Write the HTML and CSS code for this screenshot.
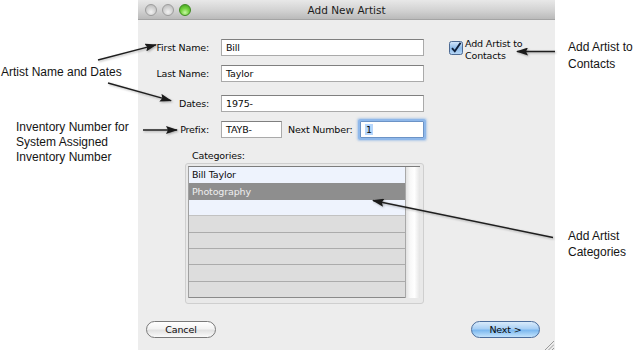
FILE: index.html
```html
<!DOCTYPE html>
<html>
<head>
<meta charset="utf-8">
<title>Add New Artist</title>
<link rel="stylesheet" href="styles.css">
</head>
<body>
<div class="page">
  <div class="notes-left">
    <div class="note note-names">Artist Name and Dates</div>
    <div class="note note-inv">Inventory Number for<br>System Assigned<br>Inventory Number</div>
  </div>

  <div class="window">
    <div class="titlebar">
      <div class="lights">
        <span class="light"></span>
        <span class="light"></span>
        <span class="light green"></span>
      </div>
      <div class="title">Add New Artist</div>
      <div></div>
    </div>

    <div class="content">
      <div class="top">
        <div class="form">
          <div class="row">
            <span class="label">First Name:</span>
            <div class="field">Bill</div>
          </div>
          <div class="row">
            <span class="label">Last Name:</span>
            <div class="field">Taylor</div>
          </div>
          <div class="row row-dates">
            <span class="label">Dates:</span>
            <div class="field">1975-</div>
          </div>
          <div class="row">
            <span class="label">Prefix:</span>
            <div class="field-group">
              <div class="field field-prefix">TAYB-</div>
              <span class="label-next">Next Number:</span>
              <div class="field field-next"><span class="sel">1</span></div>
            </div>
          </div>
        </div>
        <div class="check">
          <svg class="checkbox" width="14" height="14" viewBox="0 0 14 14">
            <defs>
              <linearGradient id="cbg" x1="0" y1="0" x2="0" y2="1">
                <stop offset="0" stop-color="#d7e8fb"/>
                <stop offset="0.5" stop-color="#8ebbea"/>
                <stop offset="1" stop-color="#b9d8f7"/>
              </linearGradient>
            </defs>
            <rect x="0.5" y="0.5" width="13" height="13" rx="2" fill="url(#cbg)" stroke="#4d6a93"/>
            <path d="M3 7.2 L5.8 10.3 L11.6 1.8" fill="none" stroke="#0f1f3a" stroke-width="1.9"/>
          </svg>
          <span class="check-label">Add Artist to<br>Contacts</span>
        </div>
      </div>

      <div class="cat-label">Categories:</div>
      <div class="list-frame">
        <div class="table">
          <div class="rows">
            <div class="trow light-row">Bill Taylor</div>
            <div class="trow light-row selected">Photography</div>
            <div class="trow light-row last-light"></div>
            <div class="trow grey-row"></div>
            <div class="trow grey-row"></div>
            <div class="trow grey-row"></div>
            <div class="trow grey-row"></div>
            <div class="trow grey-row"></div>
          </div>
          <div class="track"></div>
        </div>
      </div>

      <div class="buttons">
        <div class="btn">Cancel</div>
        <div class="btn btn-default">Next &gt;</div>
      </div>
    </div>

    <svg class="grip" width="10" height="10" viewBox="0 0 10 10">
      <g stroke="#9a9a9a" stroke-width="1">
        <line x1="1" y1="10" x2="10" y2="1"/>
        <line x1="4.5" y1="10" x2="10" y2="4.5"/>
        <line x1="8" y1="10" x2="10" y2="8"/>
      </g>
    </svg>
  </div>

  <div class="notes-right">
    <div class="note note-contacts">Add Artist to<br>Contacts</div>
    <div class="note note-cats">Add Artist<br>Categories</div>
  </div>

  <svg class="arrows" width="635" height="350" viewBox="0 0 635 350">
    <defs>
      <marker id="ah" markerWidth="12" markerHeight="8" refX="11" refY="4" orient="auto" markerUnits="userSpaceOnUse">
        <path d="M0,0 L12,4 L0,8 L2,4 z" fill="#1a1a1a"/>
      </marker>
    </defs>
    <g class="arrow-lines" stroke="#1e1e1e" stroke-width="1.3" fill="none">
      <line x1="98" y1="60" x2="156" y2="44.8" marker-end="url(#ah)"/>
      <line x1="108" y1="83" x2="171" y2="100.7" marker-end="url(#ah)"/>
      <line x1="143" y1="130" x2="177" y2="130" marker-end="url(#ah)"/>
      <line x1="555" y1="51.5" x2="517" y2="51.5" marker-end="url(#ah)"/>
      <line x1="553" y1="237.5" x2="373" y2="200.5" marker-end="url(#ah)"/>
    </g>
  </svg>
</div>
</body>
</html>
```

FILE: styles.css
```css
html, body {
  margin: 0;
  padding: 0;
  background: #ffffff;
}

.page {
  position: relative;
  display: flex;
  width: 635px;
  height: 350px;
  overflow: hidden;
  background: #ffffff;
  font-family: "Liberation Sans", Arial, sans-serif;
}

/* annotations */
.note {
  font-size: 12px;
  color: #141414;
  white-space: nowrap;
}

.notes-left {
  width: 138px;
  flex: none;
}

.note-names {
  margin-top: 64px;
  padding-left: 1px;
  line-height: 16px;
}

.note-inv {
  margin-top: 40px;
  padding-left: 16px;
  line-height: 15px;
}

.notes-right {
  flex: 1;
  padding-left: 13px;
}

.note-contacts {
  margin-top: 39px;
  line-height: 16.5px;
}

.note-cats {
  margin-top: 156px;
  line-height: 16px;
}

/* window */
.window {
  position: relative;
  width: 417px;
  height: 350px;
  flex: none;
  background: #ededed;
  display: flex;
  flex-direction: column;
  font-family: "DejaVu Sans", sans-serif;
  font-size: 9.5px;
  letter-spacing: -0.15px;
  color: #0a0a0a;
}

.titlebar {
  height: 19px;
  border-bottom: 1px solid #a4a4a4;
  background: linear-gradient(#e8e8e8, #d2d2d2 55%, #bababa);
  display: grid;
  grid-template-columns: 1fr auto 1fr;
  align-items: center;
}

.lights {
  display: flex;
  gap: 5px;
  padding-left: 7px;
}

.light {
  width: 12px;
  height: 12px;
  box-sizing: border-box;
  border-radius: 50%;
  border: 1px solid #9c9c9c;
  background: radial-gradient(circle at 50% 70%, #f2f2f2 0%, #d2d2d2 50%, #b4b4b4 100%);
}

.light.green {
  border-color: #3f8a22;
  background: radial-gradient(circle at 50% 75%, #c9f7a6 0%, #74d33f 45%, #3c9a1a 100%);
}

.title {
  font-size: 10.5px;
  letter-spacing: 0;
  color: #1c1c1c;
}

.content {
  padding-top: 19px;
  display: flex;
  flex-direction: column;
}

.top {
  display: flex;
  align-items: flex-start;
}

.form {
  display: flex;
  flex-direction: column;
}

.row {
  display: flex;
  align-items: center;
  height: 17px;
}

.row + .row {
  margin-top: 9px;
}

.row.row-dates {
  margin-top: 13px;
}

.label {
  width: 71px;
  text-align: right;
  flex: none;
}

.field {
  box-sizing: border-box;
  width: 203px;
  height: 17px;
  margin-left: 12px;
  padding-left: 4px;
  background: #ffffff;
  border: 1px solid #aaaaaa;
  border-top-color: #7f7f7f;
  line-height: 15px;
  color: #0a0a0a;
}

.field-group {
  display: flex;
  align-items: center;
  width: 203px;
  margin-left: 12px;
}

.field-group .field {
  margin-left: 0;
}

.field-prefix {
  width: 61px;
  margin-left: 1px;
}

.label-next {
  margin-left: 6px;
}

.field-next {
  width: 64px;
  margin-left: auto !important;
  border-color: #6c93c6;
  border-radius: 1px;
  box-shadow: 0 0 0 2px #8fb8ea, 0 0 2px 3px rgba(120, 170, 230, 0.5);
}

.sel {
  background: #b6d6fc;
  padding: 0 1px;
}

.check {
  display: flex;
  align-items: flex-start;
  margin-left: 25px;
  margin-top: -1px;
  gap: 2px;
}

.checkbox {
  margin-top: 3px;
  flex: none;
}

.check-label {
  line-height: 12px;
  white-space: nowrap;
}

.cat-label {
  margin-top: 12px;
  margin-left: 54px;
  line-height: 12px;
}

.list-frame {
  box-sizing: border-box;
  width: 239px;
  height: 141px;
  margin-top: 1px;
  margin-left: 47px;
  padding: 2px 3px 5px 2px;
  border: 1px solid #cfcfcf;
  border-radius: 3px;
  background: #e9e9e9;
  display: flex;
  flex-direction: column;
}

.table {
  flex: 1;
  display: flex;
  border-top: 1px solid #7c7c7c;
  border-left: 1px solid #a0a0a0;
}

.rows {
  box-sizing: border-box;
  width: 217px;
  border-right: 1px solid #a8a8a8;
  display: flex;
  flex-direction: column;
}

.trow {
  box-sizing: border-box;
  height: 16.375px;
  padding-left: 3px;
  display: flex;
  align-items: center;
  border-bottom: 1px solid transparent;
}

.light-row {
  background: #eef3fd;
}

.light-row.selected {
  background: #8e8e8e;
  color: #efefef;
}

.light-row.last-light {
  border-bottom-color: #c2c2c2;
}

.grey-row {
  background: #dddddd;
  border-bottom-color: #ababab;
}

.grey-row:last-child {
  border-bottom-color: #8a8a8a;
}

.track {
  flex: 1;
  background: linear-gradient(to right, #e2e2e2, #f8f8f8 30%, #ffffff 60%, #e4e4e4);
}

.buttons {
  display: flex;
  justify-content: space-between;
  margin-top: 17px;
  padding: 0 15px 0 8px;
}

.btn {
  box-sizing: border-box;
  width: 70px;
  height: 17px;
  border: 1px solid #7a7a7a;
  border-radius: 9px;
  background: linear-gradient(#ffffff, #f3f3f3 45%, #e2e2e2 55%, #fafafa);
  text-align: center;
  line-height: 15px;
  color: #0a0a0a;
}

.btn-default {
  width: 69px;
  border-color: #4b6d9c;
  background: linear-gradient(#d9ebfb, #a9d0f5 45%, #7cb8ef 55%, #c3e3fc);
}

.grip {
  position: absolute;
  right: 1px;
  bottom: 0;
}

.arrows {
  position: absolute;
  left: 0;
  top: 0;
  pointer-events: none;
}

.arrow-lines {
  filter: drop-shadow(1px 1.5px 1px rgba(0, 0, 0, 0.3));
}
```
